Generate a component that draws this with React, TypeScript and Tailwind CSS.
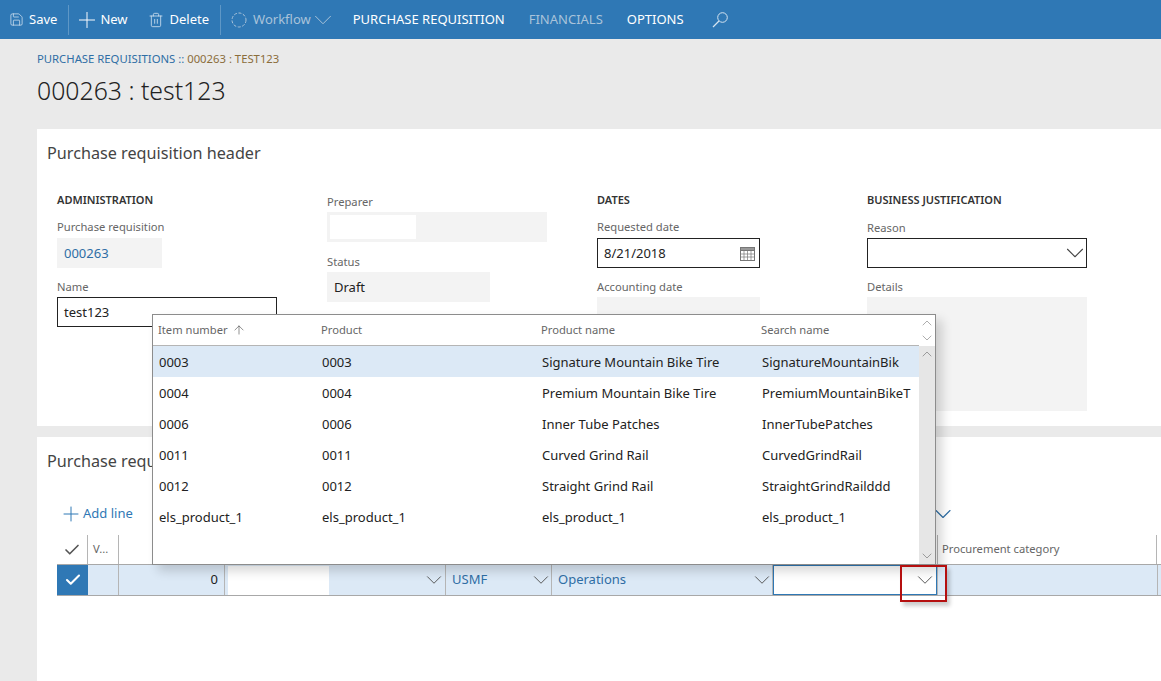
import { ChevronDown, ChevronUp, Check, Plus, Save, Trash2, ArrowUp } from "lucide-react";

const rows = [
  ["0003", "0003", "Signature Mountain Bike Tire", "SignatureMountainBik"],
  ["0004", "0004", "Premium Mountain Bike Tire", "PremiumMountainBikeT"],
  ["0006", "0006", "Inner Tube Patches", "InnerTubePatches"],
  ["0011", "0011", "Curved Grind Rail", "CurvedGrindRail"],
  ["0012", "0012", "Straight Grind Rail", "StraightGrindRailddd"],
  ["els_product_1", "els_product_1", "els_product_1", "els_product_1"],
];

function Label({ children }: { children: React.ReactNode }) {
  return <div className="text-[11.2px] leading-[16px] text-[#666666]">{children}</div>;
}

function Section({ children }: { children: React.ReactNode }) {
  return <div className="text-[11px] leading-[16px] font-semibold text-[#333333]">{children}</div>;
}

function CellChevron() {
  return <ChevronDown size={26} strokeWidth={0.9} className="-mr-[5px] shrink-0 text-[#555555]" />;
}

export default function App() {
  return (
    <div className="relative h-screen overflow-hidden bg-[#eaeaea] font-['Noto_Sans',sans-serif] text-[13px] text-[#222222]">
      {/* Top bar */}
      <div className="flex h-[39px] items-center bg-[#2f78b5] text-[13px] text-white">
        <button className="flex items-center gap-[5px] pl-[9px] pr-[11px]">
          <Save size={15} strokeWidth={1.2} className="text-[#d5e4f1]" />
          Save
        </button>
        <div className="h-[30px] w-px bg-[#5e97c6]" />
        <button className="ml-[5px] flex items-center">
          <Plus size={26} strokeWidth={0.9} />
          New
        </button>
        <button className="ml-[20px] flex items-center gap-[6px]">
          <Trash2 size={16} strokeWidth={1.2} className="text-[#d5e4f1]" />
          Delete
        </button>
        <div className="ml-[11px] h-[30px] w-px bg-[#5e97c6]" />
        <button className="ml-[10px] flex items-center gap-[6px] text-[#a9c3da]">
          <svg width="16" height="16" viewBox="0 0 16 16" fill="none" stroke="#a9c3da" strokeWidth="1" strokeDasharray="3 1.6">
            <circle cx="8" cy="8" r="7" />
          </svg>
          Workflow
          <ChevronDown size={30} strokeWidth={0.8} className="-ml-[9px] -my-[4px]" />
        </button>
        <span className="ml-[15px]">PURCHASE REQUISITION</span>
        <span className="ml-[24px] text-[#a9c3da]">FINANCIALS</span>
        <span className="ml-[24px]">OPTIONS</span>
        <svg width="17" height="16" viewBox="0 0 17 16" fill="none" stroke="#d5e4f1" strokeWidth="1" className="ml-[28px]">
          <circle cx="10.5" cy="5.5" r="4.8" />
          <path d="M7 9 L1 15" strokeWidth="1.3" />
        </svg>
      </div>

      {/* Page title */}
      <div className="h-[90px] pl-[37px] pt-[12px]">
        <div className="text-[11.3px] leading-[16px] text-[#2f6ea5]">
          PURCHASE REQUISITIONS :: <span className="text-[#8a6d3b]">000263 : TEST123</span>
        </div>
        <div className="mt-[5px] text-[24.8px] leading-[36px] font-light text-[#222222]">000263 : test123</div>
      </div>

      {/* Header card */}
      <div className="ml-[37px] h-[297px] bg-white pl-[10px] pt-[13px]">
        <div className="text-[16.2px] leading-[22px] text-[#444444]">Purchase requisition header</div>
        <div className="mt-[28px] grid grid-cols-[270px_270px_270px_270px] pl-[10px]">
          <div>
            <Section>ADMINISTRATION</Section>
            <div className="mt-[11px]"><Label>Purchase requisition</Label></div>
            <div className="mt-[3px] flex h-[30px] w-[105px] items-center bg-[#f3f3f3] pl-[7px] pt-[1px] text-[#2f6ea5]">000263</div>
            <div className="mt-[11px]"><Label>Name</Label></div>
            <div className="mt-[2px] flex h-[30px] w-[220px] items-center border border-[#222222] pl-[6px] pt-[2px]">test123</div>
          </div>
          <div>
            <div className="pt-[2px]"><Label>Preparer</Label></div>
            <div className="mt-[2px] flex h-[30px] w-[220px] items-center bg-[#f3f3f3] pl-[3px]">
              <div className="h-[24px] w-[86px] bg-white" />
            </div>
            <div className="mt-[12px]"><Label>Status</Label></div>
            <div className="mt-[2px] flex h-[30px] w-[163px] items-center bg-[#f3f3f3] pl-[7px] pt-[2px]">Draft</div>
          </div>
          <div>
            <Section>DATES</Section>
            <div className="mt-[11px]"><Label>Requested date</Label></div>
            <div className="mt-[3px] flex h-[30px] w-[163px] items-center justify-between border border-[#222222] pl-[6px] pr-[4px] pt-[1px]">
              8/21/2018
              <svg width="15" height="14" viewBox="0 0 15 14" fill="none" stroke="#777777">
                <rect x="0.5" y="0.5" width="14" height="13" />
                <rect x="0.5" y="0.5" width="14" height="3" fill="#999999" />
                <path d="M0.5 7h14M0.5 10h14M4 4v9M7.5 4v9M11 4v9" strokeWidth="0.7" />
              </svg>
            </div>
            <div className="mt-[11px]"><Label>Accounting date</Label></div>
            <div className="mt-[2px] h-[30px] w-[163px] bg-[#f3f3f3]" />
          </div>
          <div>
            <Section>BUSINESS JUSTIFICATION</Section>
            <div className="mt-[12px]"><Label>Reason</Label></div>
            <div className="mt-[2px] flex h-[30px] w-[220px] items-center justify-end border border-[#222222] pr-[2px]">
              <ChevronDown size={30} strokeWidth={0.85} className="-mr-[6px] text-[#444444]" />
            </div>
            <div className="mt-[11px]"><Label>Details</Label></div>
            <div className="mt-[2px] h-[114px] w-[220px] bg-[#f3f3f3]" />
          </div>
        </div>
      </div>

      {/* Lines card */}
      <div className="ml-[37px] mt-[11px] h-[244px] bg-white pl-[10px] pt-[13px]">
        <div className="text-[16.2px] leading-[22px] text-[#444444]">Purchase requisition lines</div>
        <div className="mt-[27px] flex h-[30px] items-center pl-[12px] text-[#2f78b5]">
          <Plus size={24} strokeWidth={1} />
          <span>Add line</span>
          <ChevronDown size={28} strokeWidth={1} className="ml-[796px] -mt-[1px] text-[#2f6ea5]" />
        </div>
        <div className="ml-[10px] mt-[6px] h-[30px] border-b border-[#a8a8a8]">
          <div className="flex h-full items-stretch text-[11.2px] text-[#666666]">
            <div className="flex w-[31px] items-center justify-center border-r border-[#b5b5b5]">
              <Check size={18} strokeWidth={2.2} className="text-[#555555]" />
            </div>
            <div className="flex w-[31px] items-center border-r border-[#b5b5b5] pl-[5px]">V...</div>
            <div className="w-[818px]" />
            <div className="flex w-[220px] items-center border-x border-[#b5b5b5] pl-[4px]">Procurement category</div>
          </div>
        </div>
        <div className="ml-[10px] flex h-[31px] items-stretch border-b border-[#a8a8a8] bg-[#dce9f6]">
          <div className="flex w-[31px] items-center justify-center bg-[#2f78b5]">
            <Check size={18} strokeWidth={2.8} className="text-white" />
          </div>
          <div className="w-[31px] border-r border-[#b5b5b5]" />
          <div className="flex w-[106px] items-center justify-end border-r border-[#b5b5b5] pr-[6px]">0</div>
          <div className="flex w-[221px] items-center justify-between border-r border-[#b5b5b5] pl-[3px] pr-[3px]">
            <div className="h-[29px] w-[101px] bg-white" />
            <CellChevron />
          </div>
          <div className="flex w-[106px] items-center justify-between border-r border-[#b5b5b5] pl-[6px] pr-[2px] text-[#2f6ea5]">
            USMF
            <CellChevron />
          </div>
          <div className="flex w-[221px] items-center justify-between border-r border-[#b5b5b5] pl-[6px] pr-[2px] text-[#2f6ea5]">
            Operations
            <CellChevron />
          </div>
          <div className="flex w-[164px] items-center justify-end border border-[#2f78b5] bg-white pr-[3px]">
            <CellChevron />
          </div>
          <div className="w-[221px] border-x border-[#b5b5b5]" />
        </div>
      </div>

      {/* Lookup popup */}
      <div className="absolute left-[152px] top-[314px] flex h-[251px] w-[784px] border border-[#8c8c8c] bg-white shadow-[6px_6px_10px_rgba(0,0,0,0.16)]">
        <div className="w-[766px]">
          <div className="grid h-[31px] grid-cols-[163px_220px_220px_163px] items-center border-b border-[#b5b5b5] pl-[5px] text-[11.2px] text-[#666666]">
            <div className="flex items-center gap-[4px]">
              Item number
              <ArrowUp size={14} strokeWidth={1} className="text-[#444444]" />
            </div>
            <div>Product</div>
            <div>Product name</div>
            <div>Search name</div>
          </div>
          {rows.map((r, i) => (
            <div
              key={r[0]}
              className={`grid h-[31px] grid-cols-[163px_220px_220px_157px] items-center pl-[6px] pt-[2px] ${i === 0 ? "bg-[#dce9f6]" : ""}`}
            >
              {r.map((c, j) => (
                <div key={j} className="overflow-hidden whitespace-nowrap">{c}</div>
              ))}
            </div>
          ))}
        </div>
        <div className="flex w-[16px] flex-col items-center">
          <div className="flex h-[31px] flex-col items-center text-[#999999]">
            <ChevronUp size={16} strokeWidth={1.2} />
            <ChevronDown size={16} strokeWidth={1.2} className="-mt-[1px]" />
          </div>
          <div className="flex w-full flex-1 flex-col items-center justify-between bg-[#e6e6e6] text-[#888888]">
            <ChevronUp size={16} strokeWidth={1.2} />
            <ChevronDown size={16} strokeWidth={1.2} />
          </div>
        </div>
      </div>

      {/* Red callout */}
      <div className="absolute left-[900px] top-[565px] h-[37px] w-[47px] border-2 border-[#b50f0f] shadow-[3px_4px_4px_rgba(0,0,0,0.2)]" />
    </div>
  );
}
